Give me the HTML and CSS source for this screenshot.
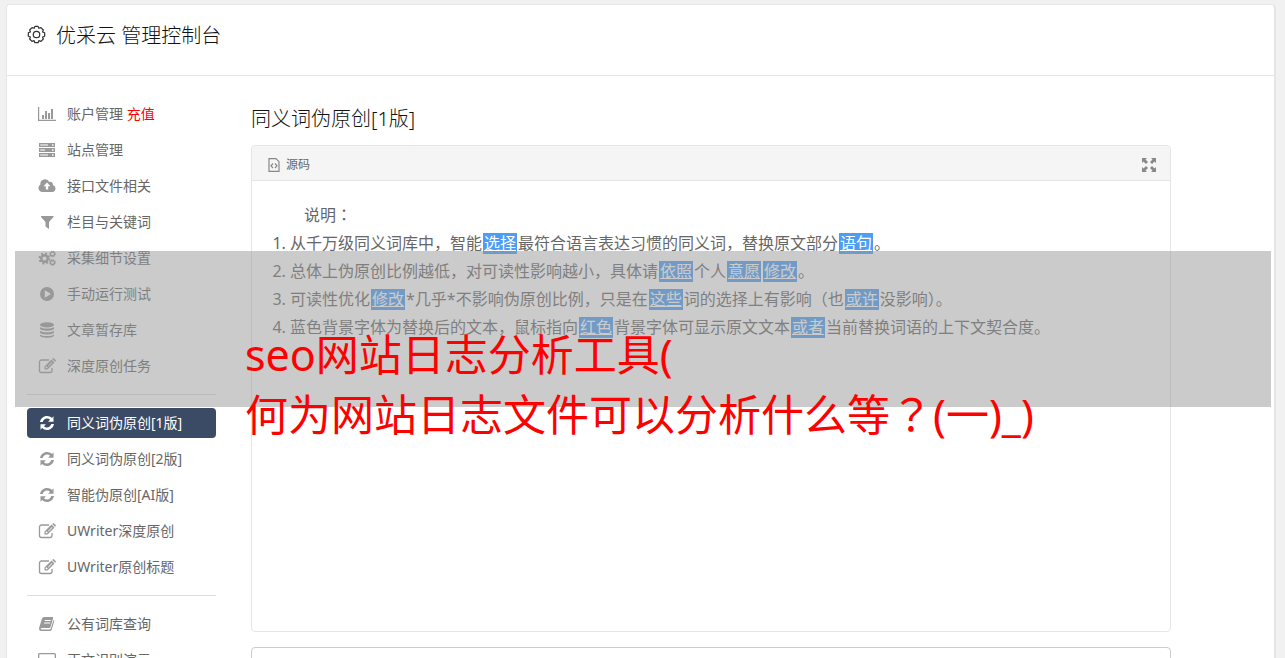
FILE: index.html
```html
<!DOCTYPE html>
<html lang="zh-CN">
<head>
<meta charset="utf-8">
<title>优采云 管理控制台</title>
<link rel="stylesheet" href="styles.css">
</head>
<body>
<svg class="sprite" aria-hidden="true">
  <symbol id="refresh" viewBox="0 0 16 16"><path d="M1 7C1.600 3.500 4.500 1 8 1c1.900 0 3.600.700 4.900 1.900L14.500 1.300V6.700H9.100l1.900-1.900C10.200 4 9.200 3.600 8 3.600 6 3.600 4.300 5 3.700 7zM15 9c-.600 3.500-3.500 6-7 6-1.900 0-3.600-.700-4.900-1.900L1.500 14.700V9.300h5.400L5 11.200c.800.800 1.800 1.200 3 1.200 2 0 3.700-1.400 4.300-3.400z"/></symbol>
  <symbol id="edit" viewBox="0 0 18 16"><path fill="none" stroke="currentColor" stroke-width="1.300" d="M11 2H3.500A2 2 0 0 0 1.500 4v8.500a2 2 0 0 0 2 2H12a2 2 0 0 0 2-2V10"/><path fill-rule="evenodd" d="M6.500 8.500 13.500 1.500l3 3-7 7h-3zM7.700 9v1.300H9l.800-.800L8.500 8.200zM10 8l.500.500 4-4L14 4z"/><path d="m14.200.900.500-.500a.900.900 0 0 1 1.300 0L17.600 2a.900.900 0 0 1 0 1.300l-.500.500z"/></symbol>
</svg>
<div class="shell">
  <header class="topbar">
    <svg class="gear" viewBox="0 0 20 20" aria-hidden="true"><path d="M8.300 1.400h3.400l.700 2 2.300-.700 2.500 2.500-.8 2.200 2.200.8v3.600l-2.200.8.800 2.200-2.500 2.500-2.200-.8-.8 2.100H8.300l-.8-2.100-2.200.8-2.500-2.500.8-2.200-2.200-.8V8.200l2.200-.8-.8-2.200 2.500-2.500 2.300.700z"/><circle cx="10" cy="10" r="3.400"/></svg>
    <h1 class="brand">优采云 管理控制台</h1>
  </header>
  <div class="layout">
    <nav class="side">
      <a class="item" href="#"><svg class="ico" viewBox="0 0 18 16"><path d="M0 1h1.200v12.800H18V15H0zM4 9h2v4H4zM7 5h2v8H7zM10 7h2v6h-2zM13 3h2v10h-2z"/></svg><span>账户管理 <em class="pay">充值</em></span></a>
      <a class="item" href="#"><svg class="ico" viewBox="0 0 18 16"><path fill-rule="evenodd" d="M1 1h16v4H1zm1.200 1.500v1H10v-1zM14 2.300v1.400h1.500V2.300zM1 6h16v4H1zm1.200 1.500v1H7v-1zM14 7.300v1.400h1.500V7.300zM1 11h16v4H1zm1.200 1.500v1H10v-1zM14 12.300v1.400h1.500v-1.400z"/></svg><span>站点管理</span></a>
      <a class="item" href="#"><svg class="ico" viewBox="0 0 18 16"><path fill-rule="evenodd" d="M4.500 14A4 4 0 0 1 2.400 6.600 4.700 4.700 0 0 1 11.300 4a2.600 2.600 0 0 1 3.500 3.100A3.500 3.500 0 0 1 14.200 14zM9 4.500 5.500 8.200h2.300v3.300h2.400V8.200h2.300z"/></svg><span>接口文件相关</span></a>
      <a class="item" href="#"><svg class="ico" viewBox="0 0 18 16"><path d="M3 2h12.500v1L11 8v7l-3.500-2.500V8L3 3z"/></svg><span>栏目与关键词</span></a>
      <a class="item" href="#"><svg class="ico" viewBox="0 0 18 16"><circle cx="6.500" cy="8.500" r="3.300" fill="none" stroke="currentColor" stroke-width="2.400"/><circle cx="6.500" cy="8.500" r="5.100" fill="none" stroke="currentColor" stroke-width="1.800" stroke-dasharray="2 2"/><circle cx="14.500" cy="4" r="2" fill="none" stroke="currentColor" stroke-width="1.300"/><circle cx="14.500" cy="4" r="2.900" fill="none" stroke="currentColor" stroke-dasharray="1.100 1.200"/><circle cx="14.500" cy="12.500" r="2" fill="none" stroke="currentColor" stroke-width="1.300"/><circle cx="14.500" cy="12.500" r="2.900" fill="none" stroke="currentColor" stroke-dasharray="1.100 1.200"/></svg><span>采集细节设置</span></a>
      <a class="item" href="#"><svg class="ico" viewBox="0 0 18 16"><path fill-rule="evenodd" d="M9 1a7 7 0 1 0 0 14A7 7 0 0 0 9 1zM6.800 4.300 13 8l-6.200 3.700z"/></svg><span>手动运行测试</span></a>
      <a class="item" href="#"><svg class="ico" viewBox="0 0 18 16"><ellipse cx="9" cy="2.800" rx="7" ry="2.600"/><path d="M2 5c2.500 2 11.500 2 14 0v1.500c0 3-14 3-14 0zM2 8.700c2.500 2 11.500 2 14 0v1.500c0 3-14 3-14 0zM2 12.400c2.500 2 11.500 2 14 0v1.200c0 3-14 3-14 0z"/></svg><span>文章暂存库</span></a>
      <a class="item" href="#"><svg class="ico"><use href="#edit"/></svg><span>深度原创任务</span></a>
      <hr class="rule">
      <a class="item active" href="#" aria-current="page"><svg class="ico"><use href="#refresh"/></svg><span>同义词伪原创[1版]</span></a>
      <a class="item" href="#"><svg class="ico"><use href="#refresh"/></svg><span>同义词伪原创[2版]</span></a>
      <a class="item" href="#"><svg class="ico"><use href="#refresh"/></svg><span>智能伪原创[AI版]</span></a>
      <a class="item" href="#"><svg class="ico"><use href="#edit"/></svg><span>UWriter深度原创</span></a>
      <a class="item" href="#"><svg class="ico"><use href="#edit"/></svg><span>UWriter原创标题</span></a>
      <hr class="rule">
      <a class="item" href="#"><svg class="ico" viewBox="0 0 18 16"><path fill-rule="evenodd" d="M6 1h8.500q1 0 .700 1L12.500 11q-.300 1-1.300 1H3.500q-1 0-.800.800.200.700 1 .700h8q.800 0 1-.800L15.600 4q1 .300.700 1.300l-2.600 8.200q-.500 1.500-2 1.500H3.500Q.500 15 1.200 11.500L4 2.500Q4.500 1 6 1zM7 4l-.300 1h6l.300-1zM6.300 6.500l-.300 1h6l.300-1z"/></svg><span>公有词库查询</span></a>
      <a class="item" href="#"><svg class="ico" viewBox="0 0 18 16"><path fill-rule="evenodd" d="M1.500 1h15Q18 1 18 2.500v9q0 1.500-1.500 1.500H11l.500 1.500h1V16h-7v-1.500h1L7 13H1.500Q0 13 0 11.500v-9Q0 1 1.500 1zm-.2 1.300v8h15.400v-8z"/></svg><span>正文识别演示</span></a>
    </nav>
    <main class="main">
      <h2 class="title">同义词伪原创[1版]</h2>
      <section class="editor">
        <div class="toolbar">
          <button class="source" type="button"><svg class="page" viewBox="0 0 12 14" aria-hidden="true"><path d="M1 .700h7l3 3v9.600H1zM5 5.500 3 7.800 5 10M7 5.500l2 2.300L7 10"/></svg>源码</button>
          <button class="expand" type="button" aria-label="全屏"><svg viewBox="0 0 14 14" aria-hidden="true"><path d="M0 0h5L3.500 1.500 6 4 4 6 1.500 3.500 0 5zM14 0v5l-1.500-1.500L10 6 8 4l2.500-2.500L9 0zM0 14V9l1.500 1.500L4 8l2 2-2.500 2.500L5 14zM14 14H9l1.500-1.500L8 10l2-2 2.500 2.500L14 9z"/></svg></button>
        </div>
        <div class="content">
          <p class="lead">说明<span class="mid" lang="zh-TW">：</span></p>
          <ol class="notes">
            <li>从千万级同义词库中，智能<a class="hl" href="#">选择</a>最符合语言表达习惯的同义词，替换原文部分<a class="hl" href="#">语句</a>。</li>
            <li>总体上伪原创比例越低，对可读性影响越小，具体请<a class="hl" href="#">依照</a>个人<a class="hl" href="#">意愿</a><a class="hl" href="#">修改</a>。</li>
            <li>可读性优化<a class="hl" href="#">修改</a>*几乎*不影响伪原创比例，只是在<a class="hl" href="#">这些</a>词的选择上有影响（也<a class="hl" href="#">或许</a>没影响）。</li>
            <li>蓝色背景字体为替换后的文本，鼠标指向<a class="hl" href="#">红色</a>背景字体可显示原文文本<a class="hl" href="#">或者</a>当前替换词语的上下文契合度。</li>
          </ol>
        </div>
      </section>
      <section class="result"></section>
    </main>
  </div>
</div>
<div class="band"></div>
<div class="caption">seo网站日志分析工具(<br>何为网站日志文件可以分析什么等<span class="mid" lang="zh-TW">？</span>(一)_)</div>
</body>
</html>
```
FILE: styles.css
```css
* { box-sizing: border-box; }
body {
  position: relative;
  margin: 0;
  height: 100vh;
  overflow: hidden;
  padding: 4px 9px 0 6px;
  background: #f1f1f1;
  color: #666;
  font-family: "Noto Sans", "Noto Sans CJK SC", sans-serif;
  font-size: 14px;
}
h1, h2, p { margin: 0; font-weight: 300; }
a { color: inherit; text-decoration: none; }
button { border: 0; padding: 0; background: none; color: inherit; font: inherit; }
.sprite { position: absolute; width: 0; height: 0; }
.mid { font-family: "Noto Sans CJK TC", sans-serif; line-height: 1; }

.shell {
  min-height: 100%;
  background: #fff;
  border: 1px solid #e5e5e5;
  border-right-width: 2px;
  border-radius: 4px 4px 0 0;
}
.topbar {
  display: flex;
  align-items: center;
  gap: 10px;
  height: 71px;
  padding: 0 20px 8px;
  border-bottom: 1px solid #e5e5e5;
}
.gear { width: 19px; height: 19px; margin-bottom: 3px; fill: none; stroke: #333; stroke-width: 1.300; stroke-linejoin: round; }
.brand { color: #111; font-size: 20px; line-height: 30px; }

.layout { display: flex; gap: 35px; padding: 23px 103px 0 20px; }
.side { display: flex; flex: 0 0 189px; flex-direction: column; gap: 6px; }
.item {
  display: flex;
  flex: 0 0 30px;
  align-items: center;
  gap: 11px;
  padding-left: 11px;
  border-radius: 4px;
  line-height: 20px;
  white-space: nowrap;
}
.ico { flex: none; width: 18px; height: 16px; fill: currentColor; color: #999; }
.pay { color: #f00; font-style: normal; }
.active { background: #3b4b66; color: #fff; }
.active .ico { color: #fff; }
.rule { width: 100%; margin: 7px 0; border: 0; border-top: 1px solid #ddd; }

.main { flex: 1; min-width: 0; padding-top: 4px; }
.title { color: #111; font-size: 20px; line-height: 32px; }
.editor { margin-top: 10px; border: 1px solid #e5e5e5; border-radius: 4px; overflow: hidden; }
.toolbar {
  display: flex;
  align-items: center;
  justify-content: space-between;
  height: 35px;
  padding: 3px 14px 0 16px;
  background: #f5f5f5;
  border-bottom: 1px solid #e5e5e5;
}
.source { display: flex; align-items: center; gap: 6px; font-size: 12px; line-height: 18px; }
.page { width: 12px; height: 14px; fill: none; stroke: #888; stroke-width: 1.200; }
.expand svg { display: block; width: 14px; height: 14px; fill: #888; }
.content { min-height: 450px; padding: 20px; font-size: 16px; line-height: 28px; }
.lead { padding-left: 32px; font-weight: 400; }
.notes { margin: 0; padding-left: 18px; }
.hl {
  display: inline-block;
  margin: 0 1px;
  padding: 0 1px;
  background: #4b9df5;
  color: #fff;
  line-height: 21px;
  text-decoration: underline;
}
.result { height: 200px; margin-top: 15px; border: 1px solid #ccc; border-radius: 4px; }

.band { position: absolute; top: 251px; right: 14px; left: 15px; height: 156px; background: rgba(151, 151, 151, 0.5); }
.caption {
  position: absolute;
  top: 325px;
  left: 245px;
  color: #f00;
  font-size: 43px;
  line-height: 60px;
  white-space: nowrap;
}
```
